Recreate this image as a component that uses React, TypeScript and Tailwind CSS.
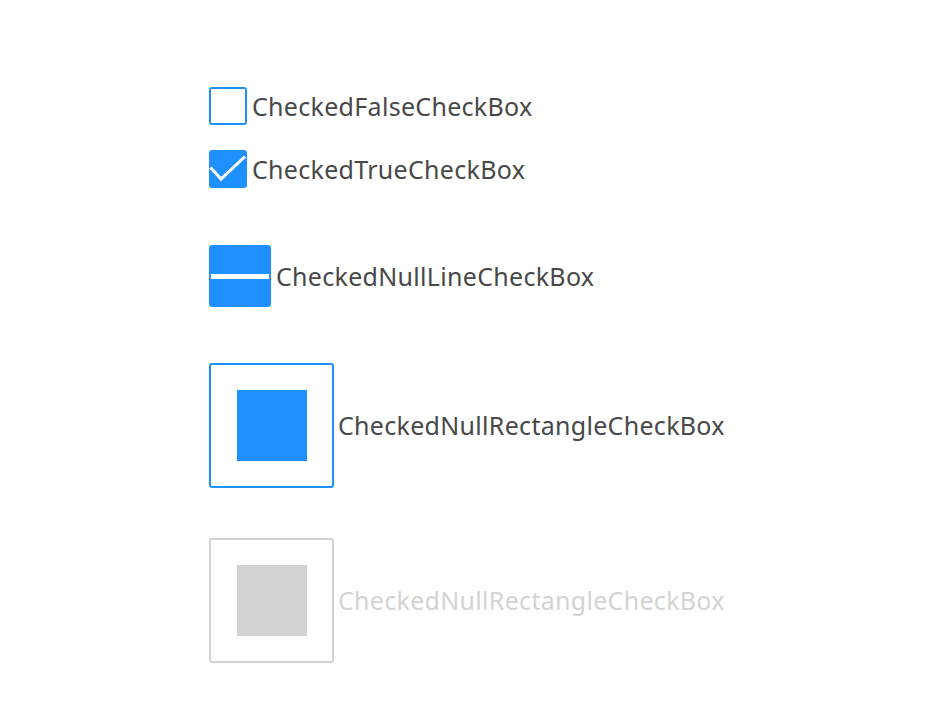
import React from "react";

const font = { fontFamily: '"Noto Sans", "Open Sans", sans-serif' };

const Label = ({ text, muted }: { text: string; muted?: boolean }) => (
    <span
        className={`text-[25px] leading-none tracking-[0.3px] ${muted ? "text-[#d3d3d3]" : "text-[#484848]"}`}
        style={font}
    >
        {text}
    </span>
);

const App = () => {
    return (
        <div className="w-[940px] h-[705px] bg-white pl-[209px] pt-[87px] flex flex-col">
            {/* unchecked */}
            <div className="flex items-center gap-[5px]">
                <div className="w-[38px] h-[38px] rounded-[3px] border-2 border-[#1e90ff] bg-white" />
                <Label text="CheckedFalseCheckBox" />
            </div>

            {/* checked */}
            <div className="flex items-center gap-[5px] mt-[25px]">
                <div className="w-[38px] h-[38px] rounded-[3px] bg-[#1e90ff]">
                    <svg width="38" height="38" viewBox="0 0 38 38">
                        <path
                            d="M1.5 17.5 L12 29 L36 6.5"
                            fill="none"
                            stroke="white"
                            strokeWidth="3"
                        />
                    </svg>
                </div>
                <Label text="CheckedTrueCheckBox" />
            </div>

            {/* null - line */}
            <div className="flex items-center gap-[5px] mt-[57px]">
                <div className="w-[62px] h-[62px] rounded-[3px] bg-[#1e90ff] flex items-center px-[2px]">
                    <div className="w-full h-[5px] bg-white" />
                </div>
                <Label text="CheckedNullLineCheckBox" />
            </div>

            {/* null - rectangle */}
            <div className="flex items-center gap-[4px] mt-[56px]">
                <div className="w-[125px] h-[125px] rounded-[3px] border-2 border-[#1e90ff] flex items-center justify-center">
                    <div className="w-[70px] h-[71px] bg-[#1e90ff]" />
                </div>
                <Label text="CheckedNullRectangleCheckBox" />
            </div>

            {/* disabled */}
            <div className="flex items-center gap-[4px] mt-[50px]">
                <div className="w-[125px] h-[125px] rounded-[3px] border-2 border-[#d3d3d3] flex items-center justify-center">
                    <div className="w-[70px] h-[71px] bg-[#d3d3d3]" />
                </div>
                <Label text="CheckedNullRectangleCheckBox" muted />
            </div>
        </div>
    );
};

export default App;
